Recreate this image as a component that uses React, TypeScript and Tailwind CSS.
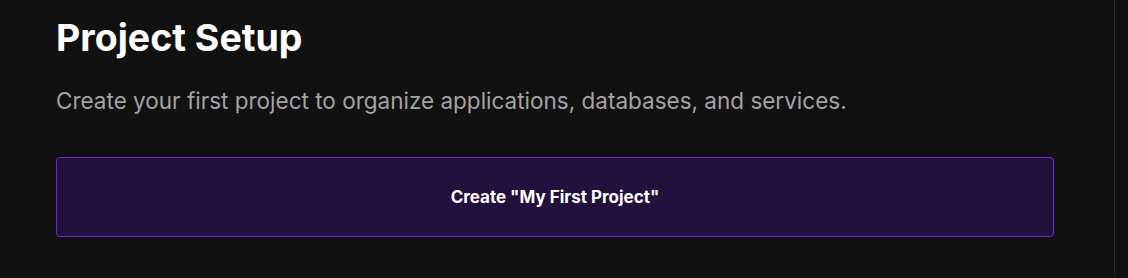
import React from "react";

export default function App() {
  return (
    <div
      className="w-[1128px] h-[278px] bg-[#111111] flex overflow-hidden"
      style={{ fontFamily: "Inter, 'Noto Sans', sans-serif" }}
    >
      <div className="w-[1114px] pl-14 pr-[60px] pt-[15px] flex flex-col">
        <h1 className="text-[37.5px] font-bold text-white leading-[46px]">Project Setup</h1>
        <p className="mt-[24px] text-[22.5px] text-[#a3a3a3] leading-8">
          Create your first project to organize applications, databases, and services.
        </p>
        <button className="mt-[40px] h-20 w-full pt-[2px] rounded-[4px] border border-[#6d28d9] bg-[#22113d] text-white font-bold text-[17px]">
          Create "My First Project"
        </button>
      </div>
      <div className="w-px h-full bg-[#2a2a2a]" />
      <div className="flex-1" />
    </div>
  );
}
